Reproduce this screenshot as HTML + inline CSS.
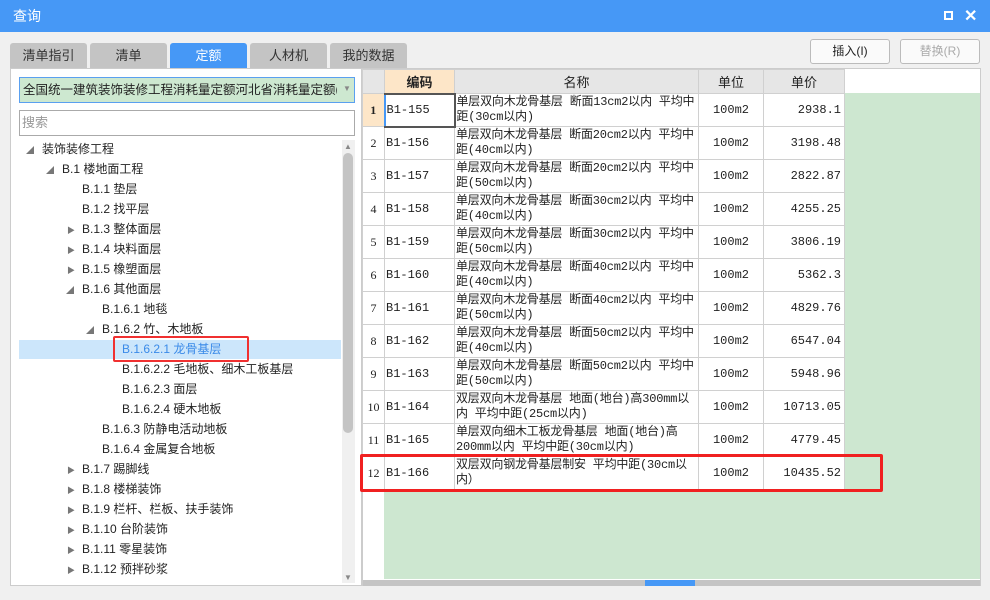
<!DOCTYPE html>
<html><head><meta charset="utf-8"><style>
*{margin:0;padding:0;box-sizing:border-box}
body{width:990px;height:600px;overflow:hidden;background:#f0f0f0;font-family:"Liberation Sans","Noto Sans CJK SC",sans-serif;font-size:12px;color:#222;position:relative}
.a{position:absolute}
.title{left:0;top:0;width:990px;height:32px;background:#4698f6;color:#fff;font-size:14px;line-height:32px;padding-left:13px}
.tab{top:43px;height:25px;width:77px;background:#c4c4c4;border-radius:3px 3px 0 0;text-align:center;line-height:25px;font-size:13px;color:#333}
.btn{top:39px;height:25px;border:1px solid #bbb;border-radius:3px;background:#fafafa;text-align:center;line-height:23px;font-size:12px}
.tree div{position:absolute;height:20px;line-height:20px;font-size:12px;white-space:nowrap}
.tri{position:absolute;font-size:8px;color:#777}
table{border-collapse:collapse;font-family:"Liberation Mono","Noto Sans CJK SC",monospace;font-size:12px;table-layout:fixed}
td{border:1px solid #d0d0d0;background:#fff;height:33px;vertical-align:middle;padding:0 1px;line-height:15px;overflow:hidden}
th{border:1px solid #d0d0d0;background:#e6e6e6;height:24px;font-weight:normal;font-family:"Liberation Sans","Noto Sans CJK SC",sans-serif;font-size:13px}
td.n{text-align:center;background:#fff;font-family:"Liberation Serif",serif}
td.c{text-align:center}td.r{text-align:right;padding-right:3px}
td.nm{letter-spacing:-0.2px;vertical-align:top;padding-top:1px}
</style></head><body>
<div class="a title">查询</div>
<div class="a" style="left:944px;top:11px;width:9px;height:9px;border:2px solid #fff"></div>
<div class="a" style="left:964px;top:6px;color:#fff;font-size:16px;font-weight:bold">✕</div>
<div class="a tab" style="left:10px">清单指引</div>
<div class="a tab" style="left:90px">清单</div>
<div class="a tab" style="left:170px;background:#4698f6;color:#fff">定额</div>
<div class="a tab" style="left:250px">人材机</div>
<div class="a tab" style="left:330px">我的数据</div>
<div class="a btn" style="left:810px;width:80px">插入(I)</div>
<div class="a btn" style="left:900px;width:80px;color:#aaa">替换(R)</div>
<div class="a" style="left:10px;top:68px;width:352px;height:518px;background:#fff;border:1px solid #ccc"></div>
<div class="a" style="left:19px;top:77px;width:336px;height:26px;background:#cde8d0;border:1px solid #5aa0f0;line-height:24px;padding-left:3px;font-size:12.5px;overflow:hidden;white-space:nowrap">全国统一建筑装饰装修工程消耗量定额河北省消耗量定额(20</div>
<div class="a" style="left:337px;top:78px;width:17px;height:24px;background:#cde8d0"></div>
<div class="a" style="left:343px;top:84px;font-size:8px;color:#888">▼</div>
<div class="a" style="left:19px;top:110px;width:336px;height:26px;background:#fff;border:1px solid #aaa;line-height:24px;padding-left:2px;color:#999;font-size:13px">搜索</div>
<div class="a" style="left:19px;top:340px;width:322px;height:19px;background:#cce6fb"></div>
<div class="a" style="left:113px;top:336px;width:136px;height:26px;border:2px solid #f03030;border-radius:2px"></div>
<div class="a" style="left:342px;top:140px;width:13px;height:443px;background:#f0f0f0"></div>
<div class="a" style="left:343px;top:153px;width:10px;height:280px;background:#c4c4c4;border-radius:5px"></div>
<div class="a" style="left:344px;top:142px;font-size:8px;color:#888">▲</div>
<div class="a" style="left:344px;top:573px;font-size:8px;color:#888">▼</div>
<div class="tree">
<div style="left:42px;top:139px">装饰装修工程</div><span class="a tri" style="left:26px;top:145px">◢</span>
<div style="left:62px;top:159px">B.1 楼地面工程</div><span class="a tri" style="left:46px;top:165px">◢</span>
<div style="left:82px;top:179px">B.1.1 垫层</div>
<div style="left:82px;top:199px">B.1.2 找平层</div>
<div style="left:82px;top:219px">B.1.3 整体面层</div><span class="a tri" style="left:67px;top:225px">▶</span>
<div style="left:82px;top:239px">B.1.4 块料面层</div><span class="a tri" style="left:67px;top:245px">▶</span>
<div style="left:82px;top:259px">B.1.5 橡塑面层</div><span class="a tri" style="left:67px;top:265px">▶</span>
<div style="left:82px;top:279px">B.1.6 其他面层</div><span class="a tri" style="left:66px;top:285px">◢</span>
<div style="left:102px;top:299px">B.1.6.1 地毯</div>
<div style="left:102px;top:319px">B.1.6.2 竹、木地板</div><span class="a tri" style="left:86px;top:325px">◢</span>
<div style="left:122px;top:339px;color:#3a8ae8">B.1.6.2.1 龙骨基层</div>
<div style="left:122px;top:359px">B.1.6.2.2 毛地板、细木工板基层</div>
<div style="left:122px;top:379px">B.1.6.2.3 面层</div>
<div style="left:122px;top:399px">B.1.6.2.4 硬木地板</div>
<div style="left:102px;top:419px">B.1.6.3 防静电活动地板</div>
<div style="left:102px;top:439px">B.1.6.4 金属复合地板</div>
<div style="left:82px;top:459px">B.1.7 踢脚线</div><span class="a tri" style="left:67px;top:465px">▶</span>
<div style="left:82px;top:479px">B.1.8 楼梯装饰</div><span class="a tri" style="left:67px;top:485px">▶</span>
<div style="left:82px;top:499px">B.1.9 栏杆、栏板、扶手装饰</div><span class="a tri" style="left:67px;top:505px">▶</span>
<div style="left:82px;top:519px">B.1.10 台阶装饰</div><span class="a tri" style="left:67px;top:525px">▶</span>
<div style="left:82px;top:539px">B.1.11 零星装饰</div><span class="a tri" style="left:67px;top:545px">▶</span>
<div style="left:82px;top:559px">B.1.12 预拌砂浆</div><span class="a tri" style="left:67px;top:565px">▶</span>
</div>
<div class="a" style="left:362px;top:68px;width:619px;height:518px;background:#fff;border:1px solid #ccc"></div>
<div class="a" style="left:384px;top:93px;width:596px;height:486px;background:#cde7d0"></div>
<div class="a" style="left:363px;top:580px;width:617px;height:6px;background:#c4c4c4"></div>
<div class="a" style="left:645px;top:580px;width:50px;height:6px;background:#4698f6"></div>
<table class="a" style="left:362px;top:69px;width:482px">
<colgroup><col style="width:22px"><col style="width:70px"><col style="width:244px"><col style="width:65px"><col style="width:81px"></colgroup>
<tr><th></th><th style="background:#fde6c8;font-weight:bold">编码</th><th>名称</th><th>单位</th><th>单价</th></tr>
<tr><td class="n" style="background:#fde6c8;font-weight:bold">1</td><td style="border:2px solid #555;border-left-color:#4698f6">B1-155</td><td class="nm">单层双向木龙骨基层 断面13cm2以内 平均中距(30cm以内)</td><td class="c">100m2</td><td class="r">2938.1</td></tr>
<tr><td class="n">2</td><td>B1-156</td><td class="nm">单层双向木龙骨基层 断面20cm2以内 平均中距(40cm以内)</td><td class="c">100m2</td><td class="r">3198.48</td></tr>
<tr><td class="n">3</td><td>B1-157</td><td class="nm">单层双向木龙骨基层 断面20cm2以内 平均中距(50cm以内)</td><td class="c">100m2</td><td class="r">2822.87</td></tr>
<tr><td class="n">4</td><td>B1-158</td><td class="nm">单层双向木龙骨基层 断面30cm2以内 平均中距(40cm以内)</td><td class="c">100m2</td><td class="r">4255.25</td></tr>
<tr><td class="n">5</td><td>B1-159</td><td class="nm">单层双向木龙骨基层 断面30cm2以内 平均中距(50cm以内)</td><td class="c">100m2</td><td class="r">3806.19</td></tr>
<tr><td class="n">6</td><td>B1-160</td><td class="nm">单层双向木龙骨基层 断面40cm2以内 平均中距(40cm以内)</td><td class="c">100m2</td><td class="r">5362.3</td></tr>
<tr><td class="n">7</td><td>B1-161</td><td class="nm">单层双向木龙骨基层 断面40cm2以内 平均中距(50cm以内)</td><td class="c">100m2</td><td class="r">4829.76</td></tr>
<tr><td class="n">8</td><td>B1-162</td><td class="nm">单层双向木龙骨基层 断面50cm2以内 平均中距(40cm以内)</td><td class="c">100m2</td><td class="r">6547.04</td></tr>
<tr><td class="n">9</td><td>B1-163</td><td class="nm">单层双向木龙骨基层 断面50cm2以内 平均中距(50cm以内)</td><td class="c">100m2</td><td class="r">5948.96</td></tr>
<tr><td class="n">10</td><td>B1-164</td><td class="nm">双层双向木龙骨基层 地面(地台)高300mm以内 平均中距(25cm以内)</td><td class="c">100m2</td><td class="r">10713.05</td></tr>
<tr><td class="n">11</td><td>B1-165</td><td class="nm">单层双向细木工板龙骨基层 地面(地台)高200mm以内 平均中距(30cm以内)</td><td class="c">100m2</td><td class="r">4779.45</td></tr>
<tr><td class="n">12</td><td>B1-166</td><td class="nm">双层双向钢龙骨基层制安 平均中距(30cm以内）</td><td class="c">100m2</td><td class="r">10435.52</td></tr>
</table>
<div class="a" style="left:360px;top:454px;width:523px;height:38px;border:3px solid #f02020;border-radius:2px"></div>
</body></html>
